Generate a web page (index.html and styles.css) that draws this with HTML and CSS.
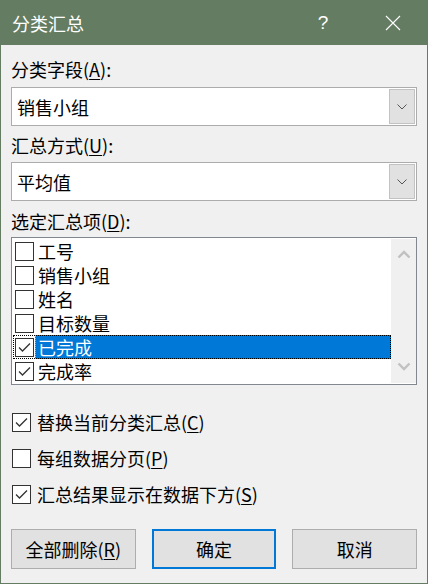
FILE: index.html
```html
<!DOCTYPE html>
<html lang="zh-CN">
<head>
<meta charset="utf-8">
<title>分类汇总</title>
<link rel="stylesheet" href="styles.css">
</head>
<body>
<div class="window">
  <div class="titlebar">
    <span class="title">分类汇总</span>
    <span class="help">?</span>
    <span class="close"><svg width="16" height="16" viewBox="0 0 16 16"><path d="M1 1 L15 15 M15 1 L1 15" stroke="#fff" stroke-width="1.1" fill="none"/></svg></span>
  </div>
  <div class="content">
    <div class="label l1">分类字段(<u>A</u>):</div>
    <div class="combo">
      <span class="value">销售小组</span>
      <span class="dd"><svg width="10" height="6" viewBox="0 0 10 6"><path d="M0.5 0.5 L5 5 L9.5 0.5" stroke="#555" stroke-width="1" fill="none"/></svg></span>
    </div>
    <div class="label l2">汇总方式(<u>U</u>):</div>
    <div class="combo">
      <span class="value">平均值</span>
      <span class="dd"><svg width="10" height="6" viewBox="0 0 10 6"><path d="M0.5 0.5 L5 5 L9.5 0.5" stroke="#555" stroke-width="1" fill="none"/></svg></span>
    </div>
    <div class="label l3">选定汇总项(<u>D</u>):</div>
    <div class="list">
      <div class="items">
        <div class="row"><span class="box"></span><span class="text">工号</span></div>
        <div class="row"><span class="box"></span><span class="text">销售小组</span></div>
        <div class="row"><span class="box"></span><span class="text">姓名</span></div>
        <div class="row"><span class="box"></span><span class="text">目标数量</span></div>
        <div class="row selected"><span class="box"><svg width="17" height="17" viewBox="0 0 17 17"><path d="M3 8.5 L6.5 12 L14 4.5" stroke="#333" stroke-width="1.3" fill="none"/></svg></span><span class="text">已完成</span></div>
        <div class="row"><span class="box"><svg width="17" height="17" viewBox="0 0 17 17"><path d="M3 8.5 L6.5 12 L14 4.5" stroke="#333" stroke-width="1.3" fill="none"/></svg></span><span class="text">完成率</span></div>
      </div>
      <div class="scrollbar">
        <svg width="14" height="9" viewBox="0 0 14 9"><path d="M1.5 7.5 L7 2 L12.5 7.5" stroke="#c1c1c1" stroke-width="2.4" fill="none"/></svg>
        <svg width="14" height="9" viewBox="0 0 14 9"><path d="M1.5 1.5 L7 7 L12.5 1.5" stroke="#c1c1c1" stroke-width="2.4" fill="none"/></svg>
      </div>
    </div>
    <div class="options">
      <div class="opt"><span class="box"><svg width="17" height="17" viewBox="0 0 17 17"><path d="M3 8.5 L6.5 12 L14 4.5" stroke="#333" stroke-width="1.3" fill="none"/></svg></span><span>替换当前分类汇总(<u>C</u>)</span></div>
      <div class="opt"><span class="box"></span><span>每组数据分页(<u>P</u>)</span></div>
      <div class="opt"><span class="box"><svg width="17" height="17" viewBox="0 0 17 17"><path d="M3 8.5 L6.5 12 L14 4.5" stroke="#333" stroke-width="1.3" fill="none"/></svg></span><span>汇总结果显示在数据下方(<u>S</u>)</span></div>
    </div>
    <div class="buttons">
      <button class="btn">全部删除(<u>R</u>)</button>
      <button class="btn default">确定</button>
      <button class="btn">取消</button>
    </div>
  </div>
</div>
</body>
</html>
```

FILE: styles.css
```css
* { box-sizing: border-box; }
html, body { margin: 0; padding: 0; }
body {
  font-family: "Noto Sans CJK SC", "Noto Sans", sans-serif;
  background: #f0f0f0;
}
u { text-decoration: underline; text-underline-offset: 2px; text-decoration-thickness: 1px; }

.window {
  width: 428px;
  height: 584px;
  border: 1px solid #647c62;
  border-top: none;
  background: #f0f0f0;
  display: flex;
  flex-direction: column;
}

.titlebar {
  height: 45px;
  background: #647c62;
  color: #fff;
  display: flex;
  align-items: center;
  padding-left: 11px;
  padding-right: 11px;
}
.title { font-size: 18px; line-height: 24px; flex: 1; }
.help {
  width: 46px;
  text-align: center;
  font-family: "Liberation Sans", sans-serif;
  font-size: 19px;
  line-height: 24px;
  margin-right: 24px;
}
.close {
  width: 46px;
  display: flex;
  justify-content: center;
  align-items: center;
}

.content {
  padding: 0 10px;
  font-size: 18px;
  color: #000;
}

.label { height: 20px; line-height: 20px; }
.l1 { margin-top: 14px; margin-bottom: 8px; }
.l2 { margin-top: 9px; margin-bottom: 7px; }
.l3 { margin-top: 10px; margin-bottom: 6px; }

.combo {
  height: 39px;
  background: #fff;
  border: 1px solid #acacac;
  display: flex;
  align-items: center;
  padding: 1px;
}
.combo .value { flex: 1; padding-left: 4px; line-height: 22px; }
.combo .dd {
  width: 26px;
  height: 100%;
  background: #e1e1e1;
  border: 1px solid #c2c2c2;
  display: flex;
  align-items: center;
  justify-content: center;
}

.list {
  height: 148px;
  background: #fff;
  border: 1px solid #828790;
  display: flex;
}
.items { flex: 1; padding-top: 1px; padding-left: 1px; }
.row {
  height: 24px;
  display: flex;
  align-items: center;
  padding-left: 2px;
}
.box {
  width: 19px;
  height: 19px;
  border: 1px solid #333;
  background: #fff;
  display: flex;
  align-items: center;
  justify-content: center;
  flex: none;
}
.row .text {
  margin-left: 1px;
  padding-left: 3px;
  height: 24px;
  line-height: 24px;
  flex: 1;
}
.row.selected {
  outline: 1px dotted #000;
  outline-offset: -1px;
}
.row.selected .text {
  background: #0078d7;
  color: #fff;
  outline: 1px dotted #f5a04a;
  outline-offset: -1px;
}
.scrollbar {
  width: 25px;
  margin: 1px 0 1px 0;
  background: #f0f0f0;
  display: flex;
  flex-direction: column;
  justify-content: space-between;
  align-items: center;
  padding: 11px 0 12px;
}

.options { margin-top: 19px; }
.opt {
  height: 36px;
  display: flex;
  align-items: center;
  padding-left: 1px;
  line-height: 22px;
}
.opt .box { margin-right: 6px; }

.buttons {
  margin-top: 17px;
  display: flex;
  gap: 16px;
}
.btn {
  width: 125px;
  height: 40px;
  background: #e1e1e1;
  border: 1px solid #adadad;
  font-family: inherit;
  font-size: 18px;
  color: #000;
  padding: 0;
  line-height: 22px;
}
.btn.default { border: 2px solid #0078d7; }
```
